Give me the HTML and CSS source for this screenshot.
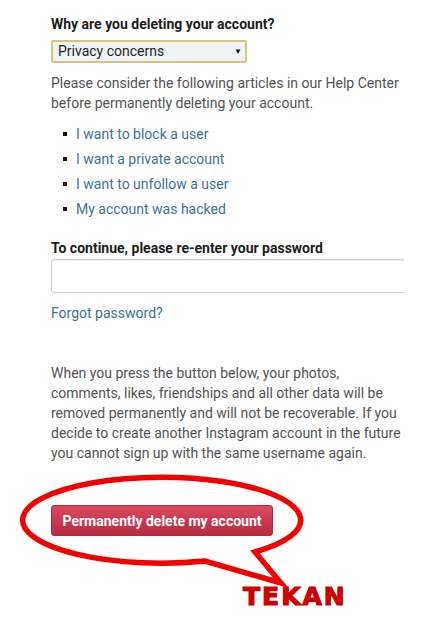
FILE: index.html
```html
<!DOCTYPE html>
<html>
<head>
<meta charset="utf-8">
<link rel="stylesheet" href="styles.css">
</head>
<body>
<main class="page">
  <h2 class="label">Why are you deleting your account?</h2>
  <div class="select">
    <span class="select-text">Privacy concerns</span>
    <span class="select-arrow">▼</span>
  </div>
  <p class="text intro">Please consider the following articles in our Help Center before permanently deleting your account.</p>
  <ul class="links">
    <li><a href="#">I want to block a user</a></li>
    <li><a href="#">I want a private account</a></li>
    <li><a href="#">I want to unfollow a user</a></li>
    <li><a href="#">My account was hacked</a></li>
  </ul>
  <h2 class="label pw-label">To continue, please re-enter your password</h2>
  <div class="input"></div>
  <a class="forgot" href="#">Forgot password?</a>
  <p class="text warning">When you press the button below, your photos, comments, likes, friendships and all other data will be removed permanently and will not be recoverable. If you decide to create another Instagram account in the future you cannot sign up with the same username again.</p>
  <div class="action">
    <button class="delete-btn">Permanently delete my account</button>
    <svg class="bubble" width="445" height="140" viewBox="0 470 445 140">
      <path d="M 205 561 A 139 43 0 1 1 255 552 L 281 583 Z" fill="none" stroke="#f20000" stroke-width="5.5" stroke-linejoin="miter"/>
    </svg>
    <div class="tekan">TEKAN</div>
  </div>
</main>
</body>
</html>
```

FILE: styles.css
```css
* { box-sizing: border-box; }
html, body { margin: 0; padding: 0; background: #fff; }
body {
  font-family: Roboto, "Liberation Sans", Arial, sans-serif;
  font-size: 14px;
  color: #4a4a4a;
}
.page {
  padding: 14px 0 0 51px;
  width: 445px;
}
.label {
  margin: 0;
  font-size: 14px;
  line-height: 20px;
  font-weight: 700;
  color: #1c1c1c;
}
.select {
  margin-top: 6px;
  width: 196px;
  height: 23px;
  border: 2px solid #d8c47e;
  border-radius: 2px;
  background: #eef4f4;
  display: flex;
  align-items: center;
  justify-content: space-between;
  padding: 0 3px 0 5px;
  color: #1e1e1e;
}
.select-text { font-size: 14px; line-height: 19px; }
.select-arrow { font-size: 8px; color: #111; }
.text {
  margin: 0;
  line-height: 20px;
  color: #525252;
  width: 360px;
}
.intro { margin-top: 10px; }
.links {
  list-style: none;
  margin: 8px 0 0 0;
  padding: 0 0 0 12px;
}
.links li {
  display: flex;
  align-items: center;
  height: 25px;
}
.links li::before {
  content: "";
  width: 4px;
  height: 4px;
  background: #111;
  margin-right: 9px;
  flex: none;
}
a { color: #3d7199; text-decoration: none; }
.pw-label { margin-top: 17px; }
.input {
  margin-top: 1px;
  width: 353px;
  height: 34px;
  border: 1px solid #cfcfcf;
  border-right: none;
  border-radius: 3px 0 0 3px;
  box-shadow: inset 0 1px 1px rgba(0,0,0,0.06);
}
.forgot {
  display: block;
  margin-top: 10px;
  line-height: 20px;
}
.warning { margin-top: 40px; }
.action {
  margin-top: 42px;
  position: relative;
  height: 120px;
}
.delete-btn {
  display: block;
  width: 222px;
  height: 31px;
  border: 1px solid #b02a3f;
  border-radius: 3px;
  background: linear-gradient(#db4a5f, #b9293f);
  color: #fff;
  font-family: Roboto, "Liberation Sans", Arial, sans-serif;
  font-weight: 700;
  font-size: 14px;
  padding: 0;
  position: relative;
  z-index: 1;
}
.bubble {
  position: absolute;
  left: -51px;
  top: -35px;
  z-index: 2;
  pointer-events: none;
}
.tekan {
  position: absolute;
  left: 192px;
  top: 79px;
  font-family: "DejaVu Sans", "Liberation Sans", sans-serif;
  font-weight: 700;
  font-size: 25px;
  line-height: 25px;
  letter-spacing: 2px;
  color: #cc0000;
  -webkit-text-stroke: 1.2px #cc0000;
}
```
